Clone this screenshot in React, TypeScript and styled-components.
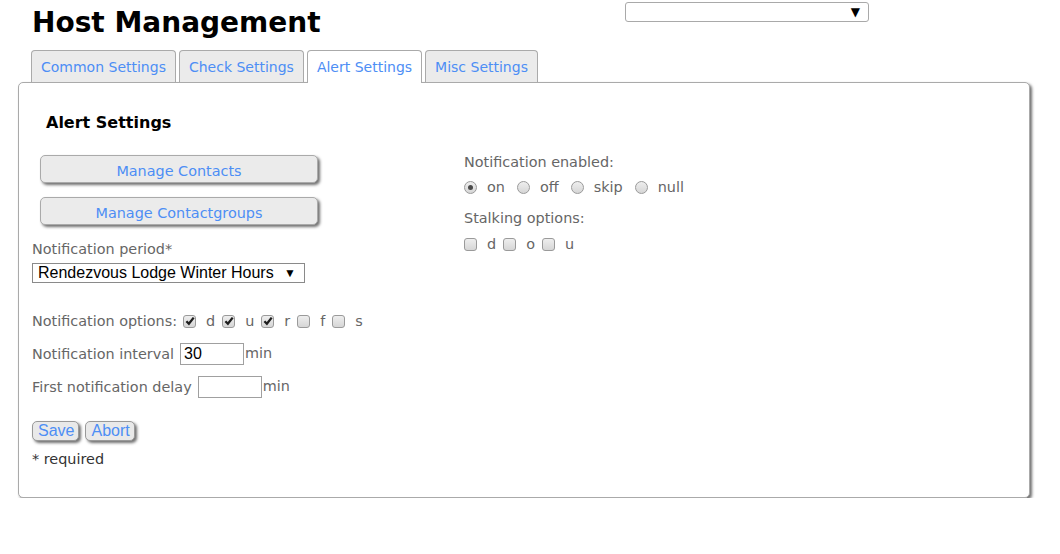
import React from "react";
import styled, { createGlobalStyle, css } from "styled-components";

const GlobalStyle = createGlobalStyle`
  body {
    margin: 0;
    background: #ffffff;
    font-family: "DejaVu Sans", Verdana, sans-serif;
  }
`;

const BLUE = "#4d8ef5";
const GRAY_TEXT = "#666666";

const Page = styled.div`
  padding-left: 18px;
  width: 1020px;
`;

const Header = styled.header`
  display: grid;
  grid-template-columns: 593px 244px;
  align-items: start;
  padding-left: 14px;
  height: 40px;
`;

const Title = styled.h1`
  margin: 6px 0 0;
  font-size: 28px;
  line-height: 34px;
  font-weight: bold;
  color: #000;
`;

const TopSelect = styled.div`
  margin-top: 2px;
  height: 20px;
  box-sizing: border-box;
  border: 1px solid #a9a9a9;
  border-radius: 3px;
  background: #fff;
  display: flex;
  align-items: center;
  justify-content: flex-end;
  padding-right: 8px;
  font-size: 12px;
  color: #000;
`;

const TabBar = styled.nav`
  display: flex;
  align-items: flex-end;
  gap: 3px;
  margin: 10px 0 0 13px;
  height: 32px;
`;

const Tab = styled.div<{ $active?: boolean }>`
  box-sizing: border-box;
  height: 32px;
  padding: 0 9px;
  border: 1px solid #aaaaaa;
  border-bottom: none;
  border-radius: 4px 4px 0 0;
  background: #ebebeb;
  color: ${BLUE};
  font-size: 14px;
  display: flex;
  align-items: center;
  ${({ $active }) =>
    $active &&
    css`
      background: #ffffff;
      height: 33px;
      margin-bottom: -1px;
      position: relative;
      z-index: 1;
    `}
`;

const Panel = styled.section`
  box-sizing: border-box;
  width: 1012px;
  height: 416px;
  border: 1px solid #aaaaaa;
  border-radius: 5px;
  box-shadow: 2px 2px 3px #707070;
  padding: 0 13px;
  background: #fff;
`;

const PanelTitle = styled.h2`
  margin: 30px 0 0;
  padding-left: 14px;
  font-size: 16px;
  line-height: 20px;
  font-weight: bold;
  color: #000;
`;

const Columns = styled.div`
  display: grid;
  grid-template-columns: 432px 1fr;
  margin-top: 19px;
`;

const Column = styled.div`
  display: flex;
  flex-direction: column;
  align-items: flex-start;
`;

const ManageButton = styled.button<{ $first?: boolean }>`
  box-sizing: border-box;
  margin: ${({ $first }) => ($first ? "3px" : "14px")} 0 0 8px;
  width: 278px;
  height: 28px;
  border: 1px solid #aaaaaa;
  border-radius: 5px;
  background: #ebebeb;
  box-shadow: 2px 2px 3px #707070;
  color: ${BLUE};
  font-family: "DejaVu Sans", Verdana, sans-serif;
  font-size: 14.4px;
  padding: 3px 0 0;
`;

const Label = styled.div<{ $top?: number; $dark?: boolean }>`
  margin-top: ${({ $top }) => $top ?? 0}px;
  font-size: 14.4px;
  line-height: 19px;
  color: ${({ $dark }) => ($dark ? "#333" : GRAY_TEXT)};
`;

const PeriodSelect = styled.div`
  margin-top: 4px;
  box-sizing: border-box;
  width: 273px;
  height: 20px;
  border: 1px solid #8a8a8a;
  background: #fff;
  display: flex;
  align-items: center;
  justify-content: space-between;
  padding: 0 8px 0 5px;
  font-family: "Liberation Sans", Arial, sans-serif;
  font-size: 16px;
  color: #000;
`;

const Arrow = styled.span`
  font-size: 12px;
  color: #000;
`;

const Row = styled.div<{ $top: number; $height: number }>`
  display: flex;
  align-items: center;
  margin-top: ${({ $top }) => $top}px;
  height: ${({ $height }) => $height}px;
  font-size: 14.4px;
  color: ${GRAY_TEXT};
`;

const RowLabel = styled.span`
  margin-right: 6px;
`;

const Option = styled.label`
  display: flex;
  align-items: center;
  gap: 10px;
  margin-right: 7px;
`;

const RadioOption = styled(Option)`
  gap: 10px;
  margin-right: 12px;
`;

const Box = styled.span`
  box-sizing: border-box;
  width: 13px;
  height: 13px;
  border: 1px solid #9a9a9a;
  border-radius: 3px;
  background: linear-gradient(#eeeeee, #d6d6d6);
  display: inline-flex;
  align-items: center;
  justify-content: center;
`;

const Circle = styled(Box)`
  border-radius: 50%;
`;

const Dot = styled.span`
  width: 5px;
  height: 5px;
  border-radius: 50%;
  background: #4a4a4a;
`;

const TextInput = styled.div<{ $width: number }>`
  box-sizing: border-box;
  width: ${({ $width }) => $width}px;
  height: 22px;
  border: 1px solid #a0a0a0;
  background: #fff;
  padding: 0 3px;
  display: flex;
  align-items: center;
  font-family: "Liberation Sans", Arial, sans-serif;
  font-size: 16px;
  color: #000;
`;

const Unit = styled.span`
  margin: 0 0 3px 1px;
  color: ${GRAY_TEXT};
`;

const FormButton = styled.button`
  box-sizing: border-box;
  height: 20px;
  padding: 0 4px 0 5px;
  margin-right: 6px;
  border: 1px solid #999;
  border-radius: 5px;
  background: #e9e9e9;
  box-shadow: 2px 2px 3px #707070;
  color: ${BLUE};
  font-family: "Liberation Sans", Arial, sans-serif;
  font-size: 16px;
  line-height: 18px;
`;

const Check = ({ checked }: { checked?: boolean }) => (
  <Box>
    {checked && (
      <svg width="10" height="10" viewBox="0 0 10 10">
        <path d="M1.4 5.2 L3.9 7.8 L8.7 1.6" fill="none" stroke="#1e1e1e" strokeWidth="2.3" />
      </svg>
    )}
  </Box>
);

const Radio = ({ checked }: { checked?: boolean }) => <Circle>{checked && <Dot />}</Circle>;

const App: React.FC = () => {
  return (
    <>
      <GlobalStyle />
      <Page>
        <Header>
          <Title>Host Management</Title>
          <TopSelect>▼</TopSelect>
        </Header>
        <TabBar>
          <Tab>Common Settings</Tab>
          <Tab>Check Settings</Tab>
          <Tab $active>Alert Settings</Tab>
          <Tab>Misc Settings</Tab>
        </TabBar>
        <Panel>
          <PanelTitle>Alert Settings</PanelTitle>
          <Columns>
            <Column>
              <ManageButton $first>Manage Contacts</ManageButton>
              <ManageButton>Manage Contactgroups</ManageButton>
              <Label $top={15}>Notification period*</Label>
              <PeriodSelect>
                <span>Rendezvous Lodge Winter Hours</span>
                <Arrow>▼</Arrow>
              </PeriodSelect>
              <Row $top={28} $height={20}>
                <RowLabel>Notification options:</RowLabel>
                <Option>
                  <Check checked /> d
                </Option>
                <Option>
                  <Check checked /> u
                </Option>
                <Option>
                  <Check checked /> r
                </Option>
                <Option>
                  <Check /> f
                </Option>
                <Option>
                  <Check /> s
                </Option>
              </Row>
              <Row $top={12} $height={22}>
                <RowLabel>Notification interval</RowLabel>
                <TextInput $width={64}>30</TextInput>
                <Unit>min</Unit>
              </Row>
              <Row $top={11} $height={22}>
                <RowLabel>First notification delay</RowLabel>
                <TextInput $width={64} />
                <Unit>min</Unit>
              </Row>
              <Row $top={23} $height={20}>
                <FormButton>Save</FormButton>
                <FormButton>Abort</FormButton>
              </Row>
              <Label $top={9} $dark>
                * required
              </Label>
            </Column>
            <Column>
              <Label $top={1}>Notification enabled:</Label>
              <Row $top={6} $height={18}>
                <RadioOption>
                  <Radio checked /> on
                </RadioOption>
                <RadioOption>
                  <Radio /> off
                </RadioOption>
                <RadioOption>
                  <Radio /> skip
                </RadioOption>
                <RadioOption>
                  <Radio /> null
                </RadioOption>
              </Row>
              <Label $top={13}>Stalking options:</Label>
              <Row $top={7} $height={18}>
                <Option>
                  <Check /> d
                </Option>
                <Option>
                  <Check /> o
                </Option>
                <Option>
                  <Check /> u
                </Option>
              </Row>
            </Column>
          </Columns>
        </Panel>
      </Page>
    </>
  );
};

export default App;
